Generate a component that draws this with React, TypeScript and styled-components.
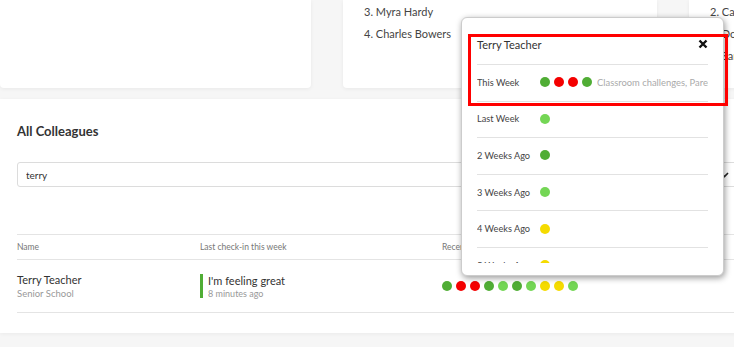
import React from "react";
import styled, { createGlobalStyle } from "styled-components";

const GlobalStyle = createGlobalStyle`
  html, body {
    margin: 0;
    padding: 0;
    background: #f6f6f6;
    font-family: Lato, "Noto Sans", sans-serif;
    color: #333;
    overflow: hidden;
  }
  * {
    box-sizing: border-box;
  }
`;

const colors: Record<string, string> = {
  dg: "#50ad35",
  lg: "#74d655",
  r: "#f40000",
  y: "#f5db00",
};

const Page = styled.div`
  position: relative;
  width: 1040px;
  height: 347px;
`;

const TopRow = styled.div`
  display: grid;
  grid-template-columns: 311px 314px 314px;
  gap: 32px;
  height: 88px;
`;

const Card = styled.div`
  background: #fff;
  border-radius: 0 0 4px 4px;
  box-shadow: 0 1px 4px rgba(0, 0, 0, 0.06);
  padding: 1px 20px 0 21px;
`;

const RankList = styled.ol`
  list-style: none;
  margin: 0;
  padding: 0;
  li {
    font-size: 11px;
    line-height: 22px;
    color: #444;
    white-space: nowrap;
  }
`;

const Panel = styled.section`
  margin-top: 11px;
  background: #fff;
  height: 234px;
  padding: 22px 17px 0;
  box-shadow: 0 1px 4px rgba(0, 0, 0, 0.05);
`;

const Title = styled.h2`
  margin: 0;
  font-size: 13px;
  line-height: 20px;
  font-weight: 700;
  color: #333;
`;

const SearchRow = styled.div`
  display: flex;
  gap: 10px;
  margin-top: 21px;
`;

const SearchInput = styled.input`
  width: 570px;
  height: 25px;
  border: 1px solid #dcdcdc;
  border-radius: 3px;
  padding: 0 8px;
  font-family: inherit;
  font-size: 10px;
  color: #333;
  outline: none;
`;

const Select = styled.div`
  width: 160px;
  height: 25px;
  border: 1px solid #dcdcdc;
  border-radius: 3px;
  display: flex;
  align-items: center;
  justify-content: flex-end;
  padding-right: 27px;
`;

const Table = styled.div`
  margin-top: 47px;
  border-top: 1px solid #e4e4e4;
`;

const Row = styled.div<{ $head?: boolean }>`
  display: grid;
  grid-template-columns: 183px 242px 1fr;
  align-items: center;
  height: ${(p) => (p.$head ? "25px" : "53px")};
  border-bottom: 1px solid #e4e4e4;
  font-size: ${(p) => (p.$head ? "8.5px" : "11px")};
  line-height: 13px;
  color: ${(p) => (p.$head ? "#777" : "#333")};
`;

const Sub = styled.div`
  font-size: 9.5px;
  line-height: 12px;
  color: #999;
  margin-top: 2px;
`;

const CheckIn = styled.div`
  border-left: 3px solid ${colors.dg};
  padding-left: 5px;
  height: 24px;
  display: flex;
  flex-direction: column;
  justify-content: center;
  line-height: 13px;
`;

const Small = styled.div`
  font-size: 9px;
  line-height: 11px;
  color: #999;
  margin-top: 1px;
`;

const Dots = styled.div`
  display: flex;
  gap: 4px;
  align-items: center;
`;

const Dot = styled.span<{ $c: string }>`
  display: inline-block;
  width: 10px;
  height: 10px;
  border-radius: 50%;
  background: ${(p) => p.$c};
  flex: none;
`;

const Popup = styled.div`
  position: absolute;
  left: 461px;
  top: 17px;
  width: 263px;
  height: 259px;
  background: #fff;
  border: 1px solid #ccc;
  border-radius: 6px;
  box-shadow: 1px 2px 6px rgba(0, 0, 0, 0.4);
  padding: 0 15px 14px 15px;
`;

const PopupHead = styled.div`
  display: flex;
  align-items: center;
  justify-content: space-between;
  height: 47px;
  padding-top: 6px;
  border-bottom: 1px solid #e2e2e2;
  font-size: 11px;
  color: #333;
`;

const WeekList = styled.div`
  height: 198px;
  overflow: hidden;
`;

const WeekRow = styled.div`
  display: flex;
  align-items: center;
  height: 36.6px;
  padding-bottom: 1px;
  border-bottom: 1px solid #e2e2e2;
  font-size: 9.2px;
  color: #444;
`;

const WeekLabel = styled.span`
  width: 63px;
  flex: none;
  white-space: nowrap;
`;

const Reasons = styled.span`
  margin-left: 5px;
  color: #aaa;
  white-space: nowrap;
  overflow: hidden;
  font-size: 9.4px;
`;

const Highlight = styled.div`
  position: absolute;
  left: 468px;
  top: 34px;
  width: 260px;
  height: 72px;
  border: 3px solid #f00;
  pointer-events: none;
`;

const recent = ["dg", "r", "r", "dg", "lg", "dg", "lg", "y", "y", "lg"];

const weeks: { label: string; dots: string[]; text?: string }[] = [
  { label: "This Week", dots: ["dg", "r", "r", "dg"], text: "Classroom challenges, Parents" },
  { label: "Last Week", dots: ["lg"] },
  { label: "2 Weeks Ago", dots: ["dg"] },
  { label: "3 Weeks Ago", dots: ["lg"] },
  { label: "4 Weeks Ago", dots: ["y"] },
  { label: "5 Weeks Ago", dots: ["y"] },
];

export default function App() {
  return (
    <Page>
      <GlobalStyle />
      <TopRow>
        <Card />
        <Card>
          <RankList>
            <li>3. Myra Hardy</li>
            <li>4. Charles Bowers</li>
          </RankList>
        </Card>
        <Card>
          <RankList>
            <li>2. Carla Mendes</li>
            <li>3. Donna Price</li>
            <li>4. Sam Lewis</li>
          </RankList>
        </Card>
      </TopRow>

      <Panel>
        <Title>All Colleagues</Title>
        <SearchRow>
          <SearchInput defaultValue="terry" />
          <Select>
            <svg width="9" height="6" viewBox="0 0 9 6">
              <path d="M1 1l3.5 3.5L8 1" stroke="#222" strokeWidth="1.6" fill="none" />
            </svg>
          </Select>
        </SearchRow>
        <Table>
          <Row $head>
            <span>Name</span>
            <span>Last check-in this week</span>
            <span>Recent check-ins</span>
          </Row>
          <Row>
            <div>
              Terry Teacher
              <Sub>Senior School</Sub>
            </div>
            <CheckIn>
              I'm feeling great
              <Small>8 minutes ago</Small>
            </CheckIn>
            <Dots>
              {recent.map((c, i) => (
                <Dot key={i} $c={colors[c]} />
              ))}
            </Dots>
          </Row>
        </Table>
      </Panel>

      <Popup>
        <PopupHead>
          <span>Terry Teacher</span>
          <svg width="10" height="10" viewBox="0 0 10 10">
            <path d="M1.5 1.5l7 7M8.5 1.5l-7 7" stroke="#111" strokeWidth="2.4" />
          </svg>
        </PopupHead>
        <WeekList>
          {weeks.map((w) => (
            <WeekRow key={w.label}>
              <WeekLabel>{w.label}</WeekLabel>
              <Dots>
                {w.dots.map((c, i) => (
                  <Dot key={i} $c={colors[c]} />
                ))}
              </Dots>
              {w.text && <Reasons>{w.text}</Reasons>}
            </WeekRow>
          ))}
        </WeekList>
      </Popup>
      <Highlight />
    </Page>
  );
}
